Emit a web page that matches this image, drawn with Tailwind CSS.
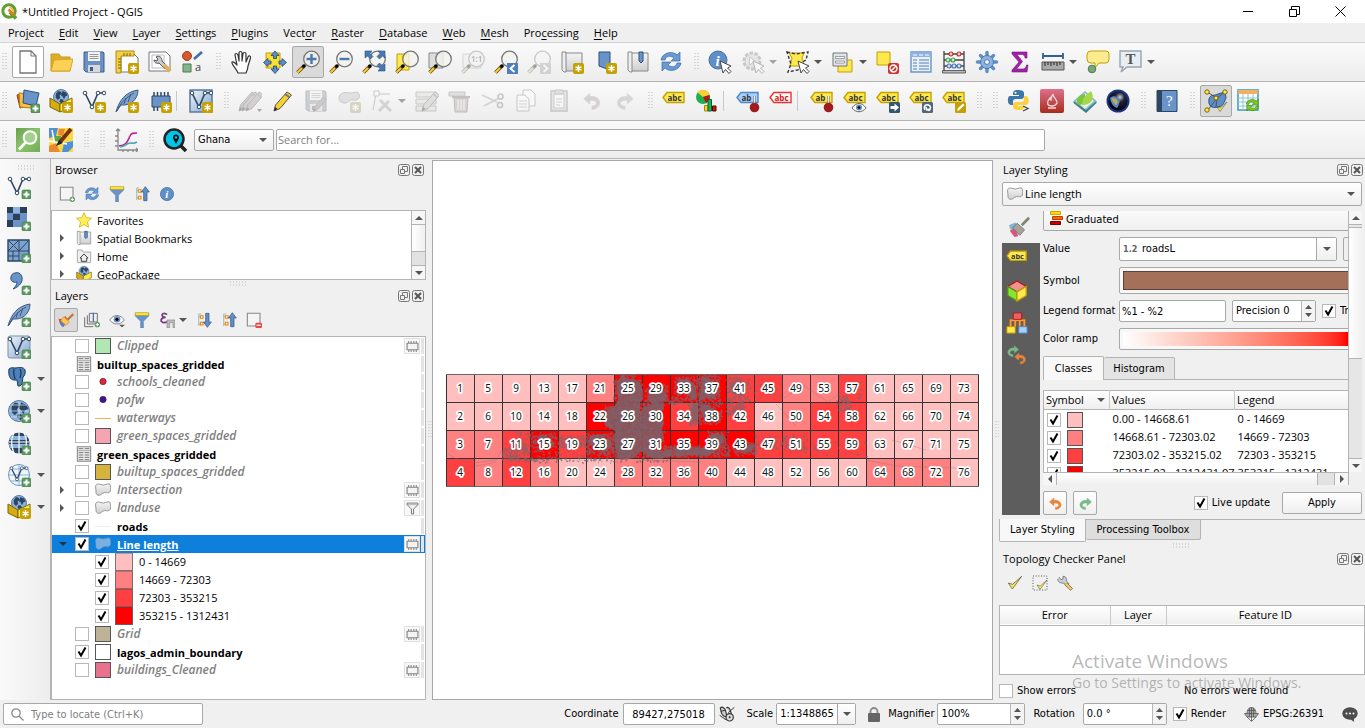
<!DOCTYPE html>
<html lang="en">
<head>
<meta charset="utf-8">
<title>*Untitled Project - QGIS</title>
<script src="https://cdn.jsdelivr.net/npm/@tailwindcss/browser@4"></script>
</head>
<body class="h-screen flex flex-col overflow-hidden bg-[#f0f0f0] text-black text-[11px] leading-4 font-['Open_Sans','Noto_Sans',sans-serif]">

<svg width="0" height="0" class="absolute" aria-hidden="true">
  <defs>
    <linearGradient id="gBlue" x1="0" y1="0" x2="1" y2="1"><stop offset="0" stop-color="#f2f6fa"/><stop offset="1" stop-color="#7fa3cf"/></linearGradient>
    <linearGradient id="gRed" x1="0" y1="0" x2="0" y2="1"><stop offset="0" stop-color="#e0708c"/><stop offset="1" stop-color="#a82c1c"/></linearGradient>
    <linearGradient id="gGreen" x1="0" y1="0" x2="1" y2="1"><stop offset="0" stop-color="#6aa04c"/><stop offset=".5" stop-color="#8cc46c"/><stop offset="1" stop-color="#74ac56"/></linearGradient>
    <radialGradient id="gGlobe" cx=".6" cy=".3" r=".7"><stop offset="0" stop-color="#c8d4e4"/><stop offset=".35" stop-color="#223"/><stop offset="1" stop-color="#000010"/></radialGradient>
    <linearGradient id="gGrey" x1="0" y1="0" x2="0" y2="1"><stop offset="0" stop-color="#f4f4f4"/><stop offset="1" stop-color="#cfcfcf"/></linearGradient>
  </defs>
</svg>

<header class="h-[23px] shrink-0 flex items-center pr-0.5 bg-white">
  <svg class="ml-px" width="17" height="17" viewBox="0 0 17 17"><circle cx="8" cy="8" r="6.2" fill="none" stroke="#5f9e2f" stroke-width="3"/><path d="M9 9l6 6.500" stroke="#5f9e2f" stroke-width="3.500"/><path d="M7.500 6.500L13 12" stroke="#ee7913" stroke-width="2.500"/><path d="M8.500 4.500a4 4 0 0 1 3.500 4" fill="none" stroke="#f3b02c" stroke-width="1.500"/></svg>
  <h1 class="ml-1 flex-1">*Untitled Project - QGIS</h1>
  <button class="w-[46px] h-full grid place-items-center" aria-label="Minimize"><svg width="11" height="11"><path d="M0 5.500h10" stroke="#000"/></svg></button>
  <button class="w-[46px] h-full grid place-items-center" aria-label="Restore"><svg width="11" height="11" fill="none" stroke="#000"><path d="M.5 3.500h7v7h-7zM2.500 3.500v-3h8v8h-3"/></svg></button>
  <button class="w-[46px] h-full grid place-items-center" aria-label="Close"><svg width="11" height="11"><path d="M.5.5l10 10M10.500.5l-10 10" stroke="#000"/></svg></button>
</header>

<nav id="menu" class="h-5 shrink-0 flex items-center gap-[15px] pl-2 border-b border-[#d2d2d2] bg-[#efefef]" aria-label="Main menu"></nav>

<div id="bar1" class="h-[39px] shrink-0 flex items-center border-b border-[#b4b4b4] bg-linear-to-b from-[#fafafa] to-[#ededed]" role="toolbar" aria-label="Project and navigation"></div>
<div id="bar2" class="h-[39px] shrink-0 flex items-center border-b border-[#b4b4b4] bg-linear-to-b from-[#fafafa] to-[#ededed]" role="toolbar" aria-label="Editing and labels"></div>
<div class="h-[38px] shrink-0 flex items-center border-b border-[#b4b4b4] bg-linear-to-b from-[#fafafa] to-[#ededed]" role="toolbar" aria-label="Search">
  <div id="bar3" class="flex items-center"></div>
  <span class="ml-[3px] w-20 grid items-center">
    <select aria-label="Country" class="col-start-1 row-start-1 h-[22px] w-full appearance-none rounded-xs border border-[#a8a8a8] bg-linear-to-b from-white to-[#efefef] px-[3px] font-['DejaVu_Sans_Condensed','Open_Sans',sans-serif]"><option>Ghana</option></select>
    <svg class="col-start-1 row-start-1 justify-self-end mr-[7px] pointer-events-none" width="8" height="4"><path d="M0 0h8L4 4z" fill="#555"/></svg>
  </span>
  <input type="text" aria-label="Search" placeholder="Search for..." class="ml-0.5 h-[22px] flex-1 mr-80 rounded-xs border border-[#a8a8a8] bg-white px-px placeholder:text-[#808080]">
</div>

<main class="flex-1 min-h-0 flex">
  <aside id="side" class="w-[50px] shrink-0 flex flex-col bg-linear-to-r from-[#fafafa] to-[#ededed]" role="toolbar" aria-label="Data sources">
    <span class="h-3 flex items-center justify-center pt-1 pl-1"><svg width="18" height="5"><path d="M0 1h18M0 4h18" stroke="#bbb" stroke-dasharray="1 2"/></svg></span>
  </aside>

  <div class="w-[376px] shrink-0 flex flex-col border-l border-[#b4b4b4] pt-px">
    <section class="flex flex-col h-[120px]" aria-label="Browser">
      <div class="h-5 flex items-center pl-1 pr-0.5 gap-0.5"><h2 class="flex-1">Browser</h2><span data-dock class="flex gap-0.5"></span></div>
      <div id="browserBar" class="h-[30px] flex items-center pl-[3px] pb-0.5"></div>
      <div class="flex-1 min-h-0 flex border border-[#b4b4b4] bg-white">
        <ul id="browserTree" class="flex-1 overflow-hidden"></ul>
        <div class="w-3.5 flex flex-col border-l border-[#b4b4b4] bg-[#e2e2e2]">
          <button aria-label="Scroll up" class="h-3.5 bg-[#f6f6f6] grid place-items-center border-b border-[#b4b4b4]"><svg width="8" height="4"><path d="M0 4h8L4 0z" fill="#555"/></svg></button>
          <div class="h-[27px] bg-linear-to-r from-white to-[#f0f0f0] border-b border-[#b4b4b4]"></div>
          <button aria-label="Scroll down" class="h-3.5 mt-auto bg-[#f6f6f6] grid place-items-center border-t border-[#b4b4b4]"><svg width="8" height="4"><path d="M0 0h8L4 4z" fill="#555"/></svg></button>
        </div>
      </div>
    </section>
    <div class="h-[6px] grid place-items-center"><svg width="18" height="5"><path d="M0 1h18M0 4h18" stroke="#bbb" stroke-dasharray="1 2"/></svg></div>
    <section class="flex-1 min-h-0 flex flex-col" aria-label="Layers">
      <div class="h-5 flex items-center pl-1 pr-0.5 gap-0.5"><h2 class="flex-1">Layers</h2><span data-dock class="flex gap-0.5"></span></div>
      <div id="layersBar" class="h-[30px] flex items-center pl-[3px] pb-0.5"></div>
      <ul id="layers" class="flex-1 min-h-0 overflow-hidden border border-[#b4b4b4] bg-white"></ul>
    </section>
  </div>

  <div class="w-[6px] shrink-0 grid place-items-center"><svg width="5" height="18"><path d="M2 0v18M5 0v18" stroke="#bbb" stroke-dasharray="1 2"/></svg></div>

  <section class="flex-1 min-w-0 mt-px bg-white border border-[#a8a8a8] flex items-center justify-center" aria-label="Map canvas">
    <svg id="map" width="533" height="113" viewBox="0 0 533 113" class="text-[10px] font-['Noto_Sans','Open_Sans',sans-serif]"></svg>
  </section>

  <div class="w-[6px] shrink-0 grid place-items-center"><svg width="5" height="18"><path d="M2 0v18M5 0v18" stroke="#bbb" stroke-dasharray="1 2"/></svg></div>

  <div class="w-[366px] shrink-0 flex flex-col pt-px font-['DejaVu_Sans_Condensed','Open_Sans',sans-serif]">
    <section class="shrink-0 flex flex-col" aria-label="Layer Styling">
      <div class="h-[22px] flex items-center pl-1 pr-0.5 pb-0.5"><h2 class="flex-1 font-['Open_Sans','Noto_Sans',sans-serif]">Layer Styling</h2><span data-dock class="flex gap-0.5"></span></div>
      <span class="ml-[3px] mr-[3px] grid items-center">
        <select aria-label="Layer" class="col-start-1 row-start-1 h-6 w-full appearance-none rounded-xs border border-[#a8a8a8] bg-linear-to-b from-white to-[#efefef] pl-[22px] font-['Open_Sans','Noto_Sans',sans-serif]"><option>Line length</option></select>
        <span data-icon="poly" data-size="16" class="col-start-1 row-start-1 ml-[5px] pointer-events-none"></span>
        <svg class="col-start-1 row-start-1 justify-self-end mr-[7px] pointer-events-none" width="8" height="4"><path d="M0 0h8L4 4z" fill="#555"/></svg>
      </span>
      <div class="mt-[5px] ml-[3px] flex h-[304px]">
        <div id="styleTabs" class="w-[38px] flex flex-col bg-[#5d5d5d]"></div>
        <div class="ml-[3px] flex-1 min-w-0 flex flex-col">
          <div class="flex h-[261px]">
            <div class="flex-1 min-w-0 overflow-hidden">
              <div class="w-[400px] flex flex-col">
                <span class="grid items-center">
                  <select aria-label="Renderer" class="col-start-1 row-start-1 h-5 w-full appearance-none rounded-b-xs border border-t-0 border-[#a8a8a8] bg-linear-to-b from-[#fafafa] to-[#efefef] pl-[22px] pb-0.5"><option>Graduated</option></select>
                  <svg class="col-start-1 row-start-1 ml-[7px] pointer-events-none self-start" width="13" height="16"><path d="M.5.5h10v3h-10z" fill="#fd0" stroke="#d8a000"/><path d="M2.500 5.500h10v3h-10z" fill="#f60" stroke="#b84000"/><path d="M.5 10.500h10v3h-10z" fill="#c00" stroke="#700"/></svg>
                </span>
                <div class="mt-[6px] h-6 flex items-center">
                  <label for="val" class="w-[76px]">Value</label>
                  <span class="w-[218px] h-6 flex items-center rounded-xs border border-[#a8a8a8] bg-white">
                    <b class="pl-[3px] w-[22px] text-[9px] text-[#666]">1.2</b>
                    <input id="val" value="roadsL" class="flex-1 min-w-0 outline-none">
                    <button aria-label="Choose field" class="w-5 h-full border-l border-[#a8a8a8] bg-linear-to-b from-white to-[#efefef] grid place-items-center"><svg width="8" height="4"><path d="M0 0h8L4 4z" fill="#555"/></svg></button>
                  </span>
                  <button aria-label="Expression" class="ml-1.5 w-6 h-6 rounded-xs border border-[#a8a8a8]"></button>
                </div>
                <div class="mt-[6px] h-[27px] flex items-center">
                  <label for="sym" class="w-[76px]">Symbol</label>
                  <button id="sym" aria-label="Change symbol" class="flex-1 h-[27px] rounded-xs border border-[#a8a8a8] bg-[#f8f8f8] p-[3px] flex"><span class="flex-1 h-full border border-[#5c4438] bg-[#a57059]"></span></button>
                </div>
                <div class="mt-[6px] h-[22px] flex items-center">
                  <label for="fmt" class="w-[76px]">Legend format</label>
                  <input id="fmt" value="%1 - %2" class="w-[107px] h-[22px] rounded-xs border border-[#a8a8a8] bg-white px-0.5">
                  <span data-spin="Precision 0" data-label="Precision" class="ml-1.5 w-[84px]"></span>
                  <label class="ml-1.5 flex items-center gap-1"><span data-check="1"></span>Trim</label>
                </div>
                <div class="mt-[6px] h-[22px] flex items-center">
                  <label for="ramp" class="w-[76px]">Color ramp</label>
                  <button id="ramp" aria-label="Color ramp" class="flex-1 h-[22px] rounded-xs border border-[#a8a8a8] bg-[#f8f8f8] p-[3px] flex"><span class="w-[224px] h-full bg-linear-to-r from-white to-[#f00]"></span><span class="flex-1 h-full bg-[#f00]"></span></button>
                </div>
                <div class="mt-[6px] h-6 flex items-end border-b border-[#b4b4b4]" role="tablist">
                  <button role="tab" aria-selected="true" class="w-[61px] h-6 -mb-px rounded-t-xs border border-b-0 border-[#b4b4b4] bg-[#f8f8f8]">Classes</button>
                  <button role="tab" class="w-[71px] h-[22px] rounded-t-xs border border-l-0 border-b-0 border-[#b4b4b4] bg-[#e4e4e4]">Histogram</button>
                </div>
                <table class="mt-2.5 w-full table-fixed border border-[#b4b4b4] bg-white border-collapse font-['Open_Sans','Noto_Sans',sans-serif]">
                  <thead><tr class="h-[19px] text-left bg-linear-to-b from-white to-[#efefef] border-b border-[#b4b4b4]">
                    <th class="w-[66px] font-normal pl-0.5 py-0 border-r border-[#c8c8c8]"><span class="flex items-center justify-between pr-1">Symbol<svg width="8" height="4"><path d="M0 0h8L4 4z" fill="#555"/></svg></span></th>
                    <th class="w-[125px] font-normal pl-0.5 py-0 border-r border-[#c8c8c8]">Values</th><th class="font-normal pl-0.5 py-0">Legend</th></tr></thead>
                  <tbody id="classes"></tbody>
                </table>
              </div>
            </div>
            <div class="w-3.5 mr-[3px] flex flex-col border-l border-[#b4b4b4] bg-[#e6e6e6]">
              <button aria-label="Scroll up" class="h-3.5 bg-[#f6f6f6] grid place-items-center border-b border-[#b4b4b4]"><svg width="8" height="4"><path d="M0 4h8L4 0z" fill="#555"/></svg></button>
              <div class="mt-0.5 h-[132px] bg-linear-to-r from-white to-[#f0f0f0] border-y border-[#b4b4b4]"></div>
              <button aria-label="Scroll down" class="h-3.5 mt-auto bg-[#f6f6f6] grid place-items-center border-t border-[#b4b4b4]"><svg width="8" height="4"><path d="M0 0h8L4 4z" fill="#555"/></svg></button>
            </div>
          </div>
          <div class="h-3.5 mr-4 flex bg-[#e2e2e2] border-t border-r border-[#b4b4b4]">
            <button aria-label="Scroll left" class="w-3.5 bg-[#f6f6f6] grid place-items-center border-r border-[#b4b4b4]"><svg width="4" height="8"><path d="M4 0v8L0 4z" fill="#555"/></svg></button>
            <div class="flex-1 mr-4 bg-linear-to-b from-white to-[#f0f0f0] border-r border-[#b4b4b4]"></div>
            <button aria-label="Scroll right" class="w-3.5 bg-[#f6f6f6] grid place-items-center border-l border-[#b4b4b4]"><svg width="4" height="8"><path d="M0 0v8L4 4z" fill="#555"/></svg></button>
          </div>
          <div class="mt-[6px] pr-[3px] flex items-center">
            <button aria-label="Undo" class="w-6 h-6 rounded-xs border border-[#a8a8a8] bg-linear-to-b from-white to-[#efefef] grid place-items-center"><span data-icon="undoO" data-size="13"></span></button>
            <button aria-label="Redo" class="ml-1.5 w-6 h-6 rounded-xs border border-[#a8a8a8] bg-linear-to-b from-white to-[#efefef] grid place-items-center"><span data-icon="redoG" data-size="13"></span></button>
            <label class="ml-auto flex items-center gap-1"><span data-check="1"></span>Live update</label>
            <button class="ml-3 w-20 h-[22px] rounded-xs border border-[#a8a8a8] bg-linear-to-b from-white to-[#efefef]">Apply</button>
          </div>
        </div>
      </div>
      <div class="mt-1 h-[23px] flex items-start" role="tablist">
        <button role="tab" aria-selected="true" class="w-[87px] h-[23px] rounded-b-xs border border-t-0 border-[#b4b4b4] bg-[#f8f8f8]">Layer Styling</button>
        <button role="tab" class="w-[115px] h-[21px] rounded-b-xs border border-l-0 border-[#b4b4b4] bg-[#dedede]">Processing Toolbox</button>
        <span class="flex-1 border-t border-[#b4b4b4]"></span>
      </div>
    </section>
    <div class="h-[7px] grid place-items-center"><svg width="18" height="5"><path d="M0 1h18M0 4h18" stroke="#bbb" stroke-dasharray="1 2"/></svg></div>
    <section class="relative flex-1 flex flex-col" aria-label="Topology Checker Panel">
      <div class="h-5 flex items-center pl-1 pr-0.5"><h2 class="flex-1 font-['Open_Sans','Noto_Sans',sans-serif]">Topology Checker Panel</h2><span data-dock class="flex gap-0.5"></span></div>
      <div id="topoBar" class="h-7 flex items-center pl-[3px]"></div>
      <div class="mt-2 h-[70px] border border-[#b4b4b4] bg-white">
        <table class="w-full table-fixed border-collapse font-['Open_Sans','Noto_Sans',sans-serif]"><thead><tr class="h-[19px] bg-linear-to-b from-white to-[#efefef] border-b border-[#b4b4b4]"><th class="w-[110px] py-0 font-normal border-r border-[#c8c8c8]">Error</th><th class="w-14 py-0 font-normal border-r border-[#c8c8c8]">Layer</th><th class="py-0 font-normal">Feature ID</th></tr></thead></table>
      </div>
      <div class="mt-2 flex items-center"><label class="w-[185px] flex items-center gap-1"><span data-check="0"></span>Show errors</label><span>No errors were found</span></div>
      <div class="absolute left-[73px] top-[100px] pointer-events-none whitespace-nowrap text-[#707070]/50 font-['Open_Sans','Noto_Sans',sans-serif]">
        <p class="text-[19px] leading-6">Activate Windows</p>
        <p class="text-sm">Go to Settings to activate Windows.</p>
      </div>
    </section>
  </div>
</main>

<footer class="h-7 shrink-0 flex items-center pl-[3px] pr-[7px] font-['DejaVu_Sans_Condensed','Open_Sans',sans-serif]">
  <span class="w-[200px] grid items-center">
    <input type="text" aria-label="Locator" placeholder="Type to locate (Ctrl+K)" class="col-start-1 row-start-1 w-full h-[22px] rounded-xs border border-[#a8a8a8] bg-white pl-[27px] placeholder:text-[#808080]">
    <svg class="col-start-1 row-start-1 ml-2 pointer-events-none" width="13" height="13" fill="none" stroke="#888" stroke-width="1.300"><circle cx="5" cy="5" r="4.200"/><path d="M8 8l4.500 4.500"/></svg>
  </span>
  <label for="coord" class="ml-auto">Coordinate</label>
  <input id="coord" value="89427,275018" class="ml-1 w-[92px] h-[22px] rounded-xs border border-[#a8a8a8] bg-white text-center">
  <button aria-label="Toggle extents" class="w-6 grid place-items-center"><span data-icon="mouse" data-size="16"></span></button>
  <label for="scale" class="ml-2">Scale</label>
  <span class="ml-[3px] w-20 h-[22px] flex rounded-xs border border-[#a8a8a8] bg-white"><input id="scale" value="1:1348865" class="flex-1 min-w-0 pl-[3px] outline-none"><button aria-label="Scales" class="w-[18px] border-l border-[#a8a8a8] bg-linear-to-b from-white to-[#efefef] grid place-items-center"><svg width="8" height="4"><path d="M0 0h8L4 4z" fill="#555"/></svg></button></span>
  <button aria-label="Lock scale" class="ml-3 mr-2"><svg width="12" height="15"><path d="M2.500 7V4.500a3.500 3.500 0 0 1 7 0V7" fill="none" stroke="#888" stroke-width="1.800"/><rect y="6" width="12" height="9" rx="1" fill="#666"/></svg></button>
  <span>Magnifier</span>
  <span data-spin="100%" data-label="Magnifier" class="ml-[3px] w-[88px]"></span>
  <span class="ml-2">Rotation</span>
  <span data-spin="0.0 °" data-label="Rotation" class="ml-2 w-[84px]"></span>
  <label class="ml-1.5 flex items-center gap-1"><span data-check="1"></span>Render</label>
  <button class="ml-[18px] flex items-center gap-1"><svg width="15" height="15" viewBox="0 0 15 15" fill="#aaa" stroke="#555" stroke-width=".8"><path d="M7.500.5C11 .5 12 4 12 6.500h2.500L12 10H3L.5 6.500H3C3 4 4 .5 7.500.5z"/><path d="M3 6.500h9M3.500 3.500h8M5.500 1v9M9.500 1v9M7.500 0v14M3 10l4.500 4.500L12 10" fill="none"/></svg>EPSG:26391</button>
  <button aria-label="Messages" class="ml-[18px]"><svg width="16" height="15"><ellipse cx="8" cy="6.500" rx="7.700" ry="6.200" fill="#4d4d4d"/><path d="M7 11l5 4v-5z" fill="#4d4d4d"/><g fill="#fff"><circle cx="4.500" cy="6.500" r="1"/><circle cx="8" cy="6.500" r="1"/><circle cx="11.500" cy="6.500" r="1"/></g></svg></button>
</footer>

<script>
/* ---- shared icon parts, 24 x 24 ---- */
const star = '<rect x="13" y="13" width="11" height="11" rx="2" fill="#c4a000"/><path d="M18.500 15v7M15.500 16.800l6 3.400M21.500 16.800l-6 3.400" stroke="#fff" stroke-width="1.500"/>';
const plus = '<rect x="15" y="15" width="9" height="9" rx="1.500" fill="#5a9a5f" stroke="#3f7a45" stroke-width=".6"/><path d="M19.500 16.500v6M16.500 19.500h6" stroke="#fff" stroke-width="2"/>';
const handle = '<path d="M8 16L1.500 22.500" stroke="#5a4a10" stroke-width="3.600"/><path d="M6 18L1.500 22.500" stroke="#fcc92f" stroke-width="2.200"/><circle cx="8" cy="16" r="1.800" fill="#000"/>';
const glass = '<circle cx="15.500" cy="9" r="7.800" fill="#f2f2ee" fill-opacity=".8" stroke="#777" stroke-width="1.300"/>' + handle;
const cursor = '<path d="M12 11l3 12 2.500-3.500 3.500 4 2-2-3.500-3.500 3.500-2z" fill="#fff" stroke="#444"/>';
const tag = (f, s, t, w) => `<path d="M1 8.500l4-5h17v10H5z" fill="${f}" stroke="${s}" stroke-width="1.400"/><text x="5.500" y="11.500" font-size="8" font-weight="700" font-family="Open Sans" fill="${w}">${t}</text>`;
const ytag = tag('#fce94f', '#c4a000', 'abc', '#333');
const ball = '<path d="M18.500 7v8" stroke="#888" stroke-width="2.500"/><path d="M18.500 7v8" stroke="#eee"/><circle cx="18.500" cy="18.500" r="4.800" fill="#a01c1c"/>';
const pencil = (f) => `<path d="M3 22l1.500-6L16 3l4.500 3L9 19.500z" fill="${f}" stroke="#555"/><path d="M14 5l4.500 3.300" stroke="#777" stroke-width="2"/><path d="M3 22l1-4 2.500 2z" fill="#222"/>`;
const vee = '<path d="M3 4l7 14 6-14h6" fill="none" stroke="#2c4763" stroke-width="1.600"/><g fill="#fff" stroke="#2c4763"><circle cx="3" cy="4" r="1.800"/><circle cx="10" cy="18" r="1.800"/><circle cx="16" cy="4" r="1.800"/><circle cx="22" cy="4" r="1.800"/></g>';
const feather = '<path d="M1 23C4 12 10 3 23 1c0 9-7 16-17 15z" fill="#7da2cf" stroke="#3c5a80"/><path d="M2 22C6 13 12 8 19 4M9 15l2-6M13 13l3-8" stroke="#3c5a80" fill="none"/>';
const land = 'M-7-4l3-4 4 1 1 3-3 2 1 3-3 3-3-3zM2-8l5 2 2 4-3 1-2 4-2-4-2-1 1-3zM-1 3l3 0 2 3-3 3-3-3z';
const globeAt = (cx, cy, r) => `<circle cx="${cx}" cy="${cy}" r="${r}" fill="#8db2dc" stroke="#5a7ca4"/><path transform="translate(${cx} ${cy}) scale(${r / 10})" d="${land}" fill="#2c4763"/>`;
const box = globeAt(12, 8, 7.5) + '<path d="M1 9l10 6v8L1 18z" fill="#d8ac10" stroke="#7a6400"/><path d="M11 15l12-6v9l-12 5z" fill="#fce94f" stroke="#7a6400"/>';
const page = '<path d="M4 1h11l5 5v17H4z" fill="#fff" stroke="#777" stroke-width="1.300"/><path d="M15 1v5h5" fill="none" stroke="#777"/>';
const scroll = '<path d="M4 3h18v18H4z" fill="url(#gGrey)" stroke="#888"/><path d="M2 2h4v20H4l-2-2z" fill="#eee" stroke="#888"/>';
const chip = '<path d="M4 7h18v11H4z" fill="#6a94c8" stroke="#2c4763"/><path d="M6 3v4M9.500 3v4M13 3v4M16.500 3v4M20 3v4M6 18v4M9.500 18v4" stroke="#2c4763" stroke-width="1.500"/>';
const floppy = '<path d="M2 2h19l1 1v19H4l-2-2z" fill="#6a90c4" stroke="#3b5c8c"/><path d="M6 2h12v9H6z" fill="#f2f2f2"/><path d="M7.500 4.500h9M7.500 6.500h9M7.500 8.500h9" stroke="#999"/><path d="M6 15h12v7H6z" fill="#d8d8d8"/><path d="M8 17h3v4H8z" fill="#3b5c8c"/>';
const arrows2 = (s) => `<path d="M2 10C3 3 13 0 18 5l3-3v9h-9l3-3C11 5 7 6 6 10z" fill="${s}" stroke="#3e6ca8" stroke-width=".7"/><path d="M22 13c-1 7-11 10-16 5l-3 3v-9h9l-3 3c4 3 8 2 9-2z" fill="${s}" stroke="#3e6ca8" stroke-width=".7"/>`;
const info = (x) => `<circle cx="10" cy="10" r="9" fill="#5f8fc8" stroke="#48719f"/><text x="7.500" y="15.500" font-size="15" font-style="italic" font-weight="700" font-family="Liberation Serif" fill="#fff">i</text>${x}`;
const undo = (f) => `<path d="M1 9l8-7v4c9-1 14 4 13 10-1 4-5 7-10 7v-4c4 0 6-2 6-4 0-3-3-4-9-4v5z" fill="${f}" stroke="${f}" stroke-linejoin="round"/>`;
const redo = (f) => `<g transform="translate(24 0) scale(-1 1)">${undo(f)}</g>`;
const mid = (s) => `<g transform="translate(3 3) scale(.75)">${s}</g>`;
const form = '<path d="M1 3h20v5H1zM1 10h20v5H1zM1 17h20v5H1z" fill="#d8dcb8" stroke="#777"/>';
const tree = '<path d="M4 3v18M4 7h4M4 18h4M4 3h4" stroke="#7aa" fill="none"/><path d="M6.500 5.500h4v4h-4zM6.500 15.500h4v4h-4z" fill="#fff" stroke="#f08000" stroke-width="1.600"/>';
const brush = '<path d="M1 12l8-5 7 9-6 6c-5 0-8-5-9-10z" fill="#c8e0a0"/><path d="M1 10l7-3 3 6-6 4z" fill="#80b0e0"/><path d="M2 16l6-3 3 9-4 1z" fill="#e05080"/><path d="M10 8l8 7-5 6-8-8z" fill="#a4a49a" stroke="#777"/><path d="M15 10l8-8" stroke="#84846c" stroke-width="3"/>';
const check = '<path d="M2 12l6 9L22 2 8.500 14z" fill="#fce94f" stroke="#444" stroke-linejoin="round"/>';
const area = 'M1 9c-1-6 3-7 8-5s8-2 13-1c2 3 2 8 1 11-3 4-6 1-9 2-5 1-4 4-9 4-5-1-3-7-4-11z';
const I = {
  new: page,
  open: '<path d="M2 4h8l2 3h9v14H2z" fill="#e0ac28" stroke="#c49a20"/><path d="M5 10l19-1-3 12H2z" fill="#fcd155" stroke="#d4a52a"/>',
  save: floppy,
  layoutNew: '<path d="M6 3h12l5 5v14H6z" fill="#fff" stroke="#777"/><path d="M1 1h18v5H6v17H1z" fill="#f4cf48" stroke="#b08a10"/><path d="M9 3v3M12 3v3M15 3v3M3 9h3M3 12h3M3 15h3M3 18h3" stroke="#7a6400"/>' + star,
  layoutMgr: '<path d="M1 2h17l4 4v15H1z" fill="#fff" stroke="#777"/><path d="M4 5h12v13H4z" fill="none" stroke="#bbc"/><path d="M8 7c3-2 6 0 6 4l5 5-2 3-6-6c-3 1-5-1-5-3l3 1 1-2z" fill="#ccc" stroke="#555"/><path d="M16 15l6 6" stroke="#e0b060" stroke-width="4"/>',
  style: '<circle cx="6" cy="6" r="4.500" fill="#d45a2c" stroke="#a03c18"/><path d="M13 9L21 2" stroke="#3f6ca8" stroke-width="2.600"/><path d="M2 14h8v8H2z" fill="#84b48c" stroke="#4d7a55"/><text x="14" y="21" font-size="11" font-family="Open Sans" fill="#444">a</text>',
  hand: '<path d="M8 23c-2-5-7-9-6-11 2-1 3 1 5 3L5 5c0-2 2-2 3 0l1 6V3c0-2 3-2 3 0v8l1-7c0-2 3-2 3 0v8l2-5c1-2 3-1 2.500 1L18 16c0 3-1 5-2 7z" fill="#fff" stroke="#333" stroke-width="1.200" stroke-linejoin="round"/>',
  pan: '<path d="M3 3h14v15H3z" fill="#fce030" stroke="#c4a000"/><path d="M12 1l4 4.500h-2.500v3h-3v-3H8zM12 23.500l4-4.500h-2.500v-3h-3v3H8zM.5 12.500l4.500-4V11h3v3H5v2.500zM23.500 12.500l-4.500-4V11h-3v3h3v2.500z" fill="#5f8fc8" stroke="#2c5080" stroke-width=".9"/>',
  zin: glass + '<path d="M15.500 4v10M10.500 9h10" stroke="#4a78b0" stroke-width="2.400"/>',
  zout: glass + '<path d="M10.500 9h10" stroke="#4a78b0" stroke-width="2.400"/>',
  zfull: glass + '<path d="M3 1h7L8 3.500l3 3L8.500 9l-3-3L3 8zM23 1h-7l2 2.500-3 3L17.500 9l3-3L23 8zM23 21h-7l2-2.500-3-3 2.500-2.500 3 3L23 14z" fill="#4a78b0" stroke="#2c5080" stroke-width=".6"/>',
  zsel: '<path d="M2 4h12v16H2z" fill="#fce94f" stroke="#c4a000"/>' + glass,
  zlay: '<path d="M1 3h14v15H1z" fill="#ddd" stroke="#888"/>' + glass,
  z11: '<path d="M2 4h18v14H2z" fill="#eee" stroke="#999"/>' + glass + '<text x="10" y="12" font-size="8" font-weight="700" font-family="Open Sans" fill="#555">1:1</text>',
  zlast: glass + '<path d="M13 13h11v11H13z" fill="#4f80ba"/><path d="M20.500 15l-4 3.500 4 3.500" fill="none" stroke="#fff" stroke-width="2"/>',
  znext: glass + '<path d="M13 13h11v11H13z" fill="#999"/><path d="M16.500 15l4 3.500-4 3.500" fill="none" stroke="#fff" stroke-width="2"/>',
  view: scroll + star,
  bmNew: '<path d="M6 2h11v14l-3 3-8-3z" fill="#6a94c8" stroke="#2c5080"/>' + star,
  bm: scroll + '<path d="M13 2h4v9l-2 2-2-2z" fill="#6a94c8" stroke="#2c5080"/>',
  refresh: arrows2('#6a9ad4'),
  ident: info(cursor),
  action: '<circle cx="11" cy="11" r="8" fill="#ccc" stroke="#777" stroke-width="3" stroke-dasharray="3.500 1.500"/><path d="M8.500 7l6 4-6 4z" fill="#fff" stroke="#777"/>' + cursor,
  select: '<path d="M3 3h15l-2 5 2 8H4l2-8z" fill="#fce94f" stroke="#c4a000"/><path d="M1 2l9 2 12-2-2 8-5 3 1 6-14 3 3-8z" fill="none" stroke="#333" stroke-width="1.400" stroke-dasharray="3 2"/>' + cursor,
  selForm: '<path d="M7 10h14v12H7z" fill="#fce94f" stroke="#c4a000"/><path d="M2 3h14v13H2z" fill="#dfe4ea" stroke="#777"/><path d="M4.500 6.500h9v2h-9zM4.500 11h9v2h-9z" fill="#fff" stroke="#888" stroke-width=".8"/>',
  desel: '<path d="M1 2h13v13H1z" fill="#fce94f" stroke="#c4a000"/><rect x="12" y="13" width="11" height="11" rx="2" fill="#d83030"/><circle cx="17.500" cy="18.500" r="3.500" fill="none" stroke="#fff" stroke-width="1.400"/><path d="M15 21l5-5" stroke="#fff" stroke-width="1.400"/>',
  table: '<path d="M2 2h20v20H2z" fill="#e8f0f8" stroke="#6a94c8" stroke-width="1.400"/><path d="M2 2h20v5H2z" fill="#8db2dc"/><path d="M4 5h4M10 5h4M16 5h4" stroke="#fff"/><path d="M4 10h4M4 13h4M4 16h4M4 19h4M10 10h10M10 13h10M10 16h10M10 19h10" stroke="#5580b4"/>',
  abacus: '<path d="M2 1v21M22 1v21M2 4h20M2 10h20M2 16h20" stroke="#444" stroke-width="1.300"/><path d="M.5 20.500h23v2.500H.5z" fill="#bbb" stroke="#444" stroke-width=".8"/><g stroke-width="1.200"><g fill="#f8c8c8" stroke="#c03030"><circle cx="9" cy="4" r="2"/><circle cx="17" cy="4" r="2"/></g><g fill="#d0ecd0" stroke="#4a9a50"><circle cx="6" cy="10" r="2"/><circle cx="11" cy="10" r="2"/></g><g fill="#d0e0f4" stroke="#4a78b0"><circle cx="7" cy="16" r="2"/><circle cx="12" cy="16" r="2"/><circle cx="17" cy="16" r="2"/></g></g>',
  gear: '<g stroke="#5f8fc8" stroke-width="3.500" stroke-linecap="round"><path d="M12 2.500v19M2.500 12h19M5.500 5.500l13 13M18.500 5.500l-13 13"/></g><circle cx="12" cy="12" r="6.500" fill="#8db2dc" stroke="#4a78b0"/><circle cx="12" cy="12" r="2.400" fill="#fff" stroke="#4a78b0"/>',
  sigma: '<path d="M4 2h15v6h-2c0-3-2-3.500-4-3.500H9l5.500 7L8.500 19H14c3 0 4-1 4.500-4H20l-1 7H4v-2l7-8L4 4z" fill="#a020a8" stroke="#7a1080" stroke-width=".6"/>',
  measure: '<path d="M2 3v6M22 3v6M2 6h20" stroke="#2f5f94" stroke-width="1.800"/><path d="M1 12h22v8H1z" fill="#aaa" stroke="#555"/><path d="M4 12v4M7 12v3M10 12v4M13 12v3M16 12v4M19 12v3" stroke="#222"/>',
  tip: '<path d="M5 1h15q3 0 3 3v5q0 4-3 4h-7l-4 5v-5H5q-4 0-4-4V5q0-4 4-4z" fill="#fcec90" stroke="#c4a000"/><circle cx="6" cy="19" r="3.800" fill="#78a878" stroke="#4d7a55"/>',
  note: '<path d="M1 1h21v16H8l-6 5 2-5H1z" fill="#e8eef4" stroke="#9aa4ae" stroke-width="1.400"/><text x="6.500" y="14" font-size="15" font-family="Liberation Serif" font-weight="700" fill="#555">T</text>',
  layers: '<path d="M1 6l12-3 3 12-12 4z" fill="#d45a2c" stroke="#a03c18"/><path d="M3 4l13 1-1 14-11-1z" fill="#fcc040" stroke="#b08010"/><path d="M8 1l15 3-3 13L7 14z" fill="#6a94c8" stroke="#2c5080"/>' + plus,
  gpkg: box + star, vNew: vee + star, feaNew: feather + star, chipNew: chip + star,
  vBox: '<path d="M1 1h22v22H1z" fill="url(#gBlue)" stroke="#5a7a9c" stroke-width="1.500"/>' + vee + star,
  pencils: '<g transform="translate(-2 0)">' + pencil('#888') + '</g><g transform="translate(1 0)">' + pencil('#999') + '</g><g transform="translate(5 0)">' + pencil('#b88888') + '</g><path d="M19 20h5l-2.500 3z" fill="#222"/>',
  edit: pencil('#f4d030'),
  saveEd: floppy + '<g transform="translate(7 6) scale(.75)">' + pencil('#c66') + '</g>',
  blob: '<path d="M2 9c0-6 8-6 10-5s8-3 10 1-2 7-6 6-4 3-8 3-6-2-6-5z" fill="#bbb" stroke="#777"/>' + star,
  vertex: '<path d="M3 21L6 5h14" fill="none" stroke="#777"/><path d="M4 2h5v5H4z" fill="#fff" stroke="#777"/><path d="M9 22l10-10M10 11l11 11" stroke="#999" stroke-width="3"/>',
  formEd: form + '<g transform="translate(4 0)">' + pencil('#bbb') + '</g>',
  trash: '<path d="M1 3h16v4H1z" fill="#bbb" stroke="#777"/><path d="M6 9h14l-1 14H7z" fill="#c89090" stroke="#a05050"/><path d="M4 7h18v2H4z" fill="#a05050"/><path d="M10 11v10M13 11v10M16 11v10" stroke="#fff"/>',
  cut: '<path d="M1 6l15 7M3 17L18 9" stroke="#999" stroke-width="1.800"/><g fill="none" stroke="#777" stroke-width="1.700"><circle cx="19.500" cy="7.500" r="2.500"/><circle cx="19" cy="16" r="2.500"/></g>',
  copy: '<path d="M9 1h8l4 4v12H9z" fill="#fff" stroke="#777"/><path d="M3 6h8l4 4v12H3z" fill="#fff" stroke="#777"/><path d="M5 12h8M5 15h8M5 18h8" stroke="#999"/>',
  paste: '<path d="M4 2h16v20H4z" fill="#ccc" stroke="#777" stroke-width="1.400"/><path d="M7 5h10v14H7z" fill="#fff" stroke="#888"/><path d="M8 1h8v4H8z" fill="#bbb" stroke="#777"/><path d="M9 10h6M9 13h6M9 16h4" stroke="#888"/>',
  undo: mid(undo('#b09080')), redo: mid(redo('#90a890')), undoO: undo('#e8833a'), redoG: redo('#7ab888'),
  undoRedo: '<g transform="translate(1 1) scale(.55)">' + redo('#7ab888') + '</g><g transform="translate(9 9) scale(.55)">' + undo('#e8833a') + '</g>',
  abc: ytag,
  diag: '<circle cx="8" cy="8" r="7" fill="#1eb050"/><path d="M8 8V1a7 7 0 0 1 6.500 5z" fill="#fcd030"/><path d="M8 8L2.500 3.500A7 7 0 0 1 10 1.200z" fill="#fcd030"/><path d="M8 8l6.500-2A7 7 0 0 1 11 14z" fill="#b01818"/><path d="M9.500 16.500h3.500V22H9.500z" fill="#fcd030" stroke="#a80"/><path d="M13 10.500h3.500V22H13z" fill="#1eb050" stroke="#063"/><path d="M17.500 17h3.500v5h-3.500z" fill="#c01818" stroke="#600"/>',
  abcB: tag('#a8d0f8', '#4a88d0', 'ab', '#333') + ball, abcR: tag('#fff', '#f03030', 'abc', '#e01010'),
  abcP: tag('#fce94f', '#c4a000', 'ab', '#333') + ball,
  abcE: ytag + '<path d="M9 19c4-6 10-6 14 0-4 5-10 5-14 0z" fill="#fff" stroke="#666"/><circle cx="16" cy="18.500" r="3" fill="#5f8fc8"/><circle cx="16" cy="18.500" r="1.300" fill="#000"/>',
  abcM: ytag + '<rect x="13" y="13" width="11" height="11" rx="1.500" fill="#34566e"/><path d="M14.500 17h4v-2.500l4.500 4-4.500 4V20h-4z" fill="#fff"/>',
  abcT: ytag + '<rect x="13" y="13" width="11" height="11" rx="1.500" fill="#50687c"/><path d="M16 21c-2-4 1-6 3.500-5s3 4 0 6M17 18l1 3 3-1" fill="none" stroke="#fff" stroke-width="1.500"/>',
  abcC: ytag + '<rect x="13" y="13" width="11" height="11" rx="1.500" fill="#c4a000"/><path d="M15 22l1-3 5-4.500 1.500 1.500-5 5z" fill="#fff"/>',
  py: '<path d="M11 1c-5 0-5 2-5 5h6v1H3c-3 0-3 9 1 9h2v-3c0-3 2-3 3-3h5c2 0 3-1 3-3V4c0-2-2-3-6-3z" fill="#3d77a8"/><path d="M12 21c5 0 5-2 5-4h-6v-1h8c4 0 3-9 0-9h-2v3c0 2-1 3-3 3H9c-2 0-3 1-3 3v2c0 2 2 3 6 3z" fill="#fcd040"/><circle cx="8.500" cy="3.800" r="1" fill="#fff"/><path d="M16 17l5 2.500-5 2.500" fill="none" stroke="#444" stroke-width="1.300"/>',
  fire: '<rect width="24" height="24" rx="2" fill="url(#gRed)"/><path d="M12 17c-6 0-5-5-2-8-0 2 1 2 1 2 0-3 1-4 2-6 0 4 5 6 4 9-1 2-2 3-5 3zM8 19h8" fill="none" stroke="#f4d8d8" stroke-width="1.400"/>',
  leaf: '<path d="M12 2l11.500 10L13 22 .5 12z" fill="#8ab8c0"/><path d="M.5 12v2L13 24l10.500-10v-2L13 21z" fill="#3c8088"/><path d="M3 12l9-8 9 8-9 8z" fill="#e4f0f0"/><path d="M5 16C2 10 6 6 12 5c1 6 0 11-7 11z" fill="#7cc43c"/><path d="M9 16c0-7 4-10 9-14 4 7 1 14-9 14z" fill="#a4d848"/>',
  globe: '<circle cx="12" cy="12" r="11.500" fill="#1c3480"/><circle cx="12" cy="12" r="9.500" fill="url(#gGlobe)"/><path d="M4 9c3-3 7-2 8 1l2 2c-1 2-1 4-3 7-3-1-6-4-7-10z" fill="#5a8cc0"/><path d="M6 9l4 1 2 3-2 3c-2-2-4-4-4-7z" fill="#c8a858"/>',
  help: '<path d="M2 1.500h20v21H2z" fill="#6a94c8" stroke="#2c4763"/><path d="M2 1.500h5v21H2z" fill="#2c4763"/><text x="11" y="17" font-size="15" font-family="Liberation Serif" fill="#fff">?</text>',
  topo: '<path d="M5 10c1-5 6-3 9-5l7-2 1 6c-2 4-2 8-8 9-7 2-10-2-9-8z" fill="#5f8fc8" stroke="#2c5080"/><path d="M4 21L13 9l8-6M3 3l10 6-1 9" fill="none" stroke="#555"/><g fill="#fce94f" stroke="#7a6400"><circle cx="3" cy="3" r="2.200"/><circle cx="21" cy="3" r="2.200"/><circle cx="3" cy="21" r="2.200"/><circle cx="12" cy="9" r="2"/></g><g transform="translate(12 12) scale(.5)">' + check + '</g>',
  tblRef: '<path d="M1 1h20v20H1z" fill="#fff" stroke="#3a98b8" stroke-width="1.500"/><path d="M1 1h20v4H1z" fill="#f4b060"/><path d="M1 9h20M1 13h20M1 17h20M6 5v16M11 5v16M16 5v16" stroke="#88c4d8"/><g transform="translate(8 9) scale(.62)"><path d="M2 10C3 3 13 0 18 5l3-3v9h-9l3-3C11 5 7 6 6 10z" fill="#78d020" stroke="#3c8008"/><path d="M22 13c-1 7-11 10-16 5l-3 3v-9h9l-3 3c4 3 8 2 9-2z" fill="#78d020" stroke="#3c8008"/></g>',
  osm: '<rect width="24" height="24" fill="url(#gGreen)"/><circle cx="14" cy="9.500" r="6.300" fill="#a4d090" stroke="#fff" stroke-width="2"/><path d="M10 14l-7 7.500" stroke="#fff" stroke-width="2.600"/>',
  map: '<rect width="24" height="24" fill="#f8d848"/><path d="M0 0h9l-2 8-7 2zM13 24l2-9 9-2v6l-5 5z" fill="#5090d8"/><path d="M5 8h7v7H5z" fill="#58a848"/><path d="M3 2l4 20M0 13l18 3" stroke="#fff" stroke-width="1.500"/><path d="M0 18l7-3 4 9H0zM10 1l6 0-2 7-5-1z" fill="#e88830"/><path d="M11 14L22 1" stroke="#7c3008" stroke-width="4"/><path d="M7 18l3-6 4 3z" fill="#222"/>',
  chart: '<path d="M4 1v21h20M2 3l2-2 2 2M22 20l2 2-2 2M1 8h3M1 13h3M1 18h3M9 22v2M14 22v2M19 22v2" stroke="#888" fill="none" stroke-width="1.300"/><path d="M5 18c8-1 8-4 11-10 1-3 3-3 7-3" fill="none" stroke="#c02090" stroke-width="1.600"/><path d="M6 19c6 0 6-4 10-4 3 0 4 1 7-1" fill="none" stroke="#48a8b8" stroke-width="1.600"/>',
  cyan: '<circle cx="11" cy="11" r="9.500" fill="#00c4e8" stroke="#222" stroke-width="2.500"/><path d="M18 18l5 5" stroke="#222" stroke-width="3.500"/><path d="M13 16c-2-4-3-5-3-6.500a3 3 0 0 1 6 0c0 1.500-1 2.500-3 6.500z" fill="#111"/><circle cx="13" cy="9.500" r="1.200" fill="#00c4e8"/>',
  sV: vee + plus, sFea: feather + plus,
  sRas: '<path d="M0 0h20v20H0z" fill="#6a94c8"/><path d="M0 0h6v6H0zM13 0h7v6h-7zM6 7h7v6H6zM0 13h6v7H0z" fill="#2c3e58"/><path d="M6 0h7v6H6z" fill="#8db2dc"/>' + plus,
  sMesh: '<path d="M1 1h21v21H1z" fill="#7da2cf" stroke="#2c4763" stroke-width="1.400"/><path d="M1 12h21M12 1v21M1 1l11 11M1 12L12 1M12 12L22 1M1 17h11M6 12v10" stroke="#2c4763" fill="none"/>' + plus,
  sComma: '<path d="M8 2c6-2 9 5 6 10-2 3-5 5-8 6 3-3 4-5 4-7-4 1-7-1-6-5 0-2 2-4 4-4z" fill="#6a94c8" stroke="#2c5080"/>' + plus,
  sVB: '<rect x="1" y="1" width="22" height="22" rx="2" fill="url(#gBlue)" stroke="#7a90a8"/>' + vee + plus,
  sPg: '<path d="M2 2c2-2 5-1 7-1 3-1 8-1 9 2 1 4-1 6-2 7l-1 7-2 2h-2l-1-6H7C3 13 1 8 2 2z" fill="#4f80b8" stroke="#1c3a5c"/><path d="M7 2c-1 4 0 6 1 10M13 2c2 3 1 5 0 9" stroke="#1c3a5c" fill="none" stroke-width="1.300"/>' + plus,
  sWms: globeAt(12, 12, 10.5) + '<path d="M2 12h20M12 2v20M4 6h16M4 18h16" stroke="#dce8f4" stroke-width=".7"/>' + plus,
  sWcs: '<circle cx="12" cy="12" r="10.500" fill="#2c4763"/><path d="M4 5h16v4H2zM1.500 13h20v4H3z" fill="#8db2dc"/><path d="M2 11h20M12 1v22M7 2c-4 7-3 13 0 20M17 2c4 7 3 13 0 20" stroke="#fff" fill="none" stroke-width="1.200"/>' + plus,
  sWfs: '<circle cx="12" cy="12" r="10.500" fill="#f0f5fa" stroke="#6a94c8"/><path d="M2 12h20M12 2v20M4 6h16M4 18h16" stroke="#8db2dc"/><g transform="translate(2 2) scale(.8)">' + vee + '</g>' + plus,
  sGp: box + star,
  bAdd: '<path d="M2 2h19v19H2z" fill="#f4f4f4" stroke="#888" stroke-width="1.600"/><circle cx="20" cy="20" r="4" fill="#5a9a5f"/><path d="M20 17.500v5M17.500 20h5" stroke="#fff" stroke-width="1.500"/>',
  filter: '<path d="M2 2h20v4l-8 8v10h-4V14L2 6z" fill="#6a94c8" stroke="#5580b4"/><path d="M2 1h20v4H2z" fill="#fce94f" stroke="#c4a000"/>',
  collapse: tree + '<path d="M17 1l6 8h-3.500v13h-5V9H11z" fill="#5f8fc8" stroke="#2c5080"/>',
  expand: tree + '<path d="M17 23l6-8h-3.500V2h-5v13H11z" fill="#5f8fc8" stroke="#2c5080"/>',
  infoS: '<g transform="translate(1 1) scale(1.100)">' + info('') + '</g>',
  fav: '<path d="M12 1l3.200 7.500 8 .8-6 5.500 1.800 8.200-7-4.400L5 23l1.800-8.200-6-5.500 8-.8z" fill="#fcf060" stroke="#e0b820" stroke-width="1.400"/>',
  home: '<path d="M2 3h7l2 3h11v16H2z" fill="#eee" stroke="#888"/><path d="M6 15l6-6 6 6h-2v5H8v-5z" fill="none" stroke="#444" stroke-width="1.500"/>',
  lStyle: '<path d="M1 10l6 1 4-5 3 4-7 12C4 21 2 16 1 10z" fill="#e84040"/><path d="M2 15l5-2 5 4-4 6z" fill="#4a88d8"/><path d="M9 7l8 8-5 5-8-7z" fill="#fcc850" stroke="#c08820"/><path d="M14 12l9-9" stroke="#c07840" stroke-width="3.500"/>',
  group: '<path d="M1 8v14h13M5 5v13h13" fill="none" stroke="#666" stroke-width="1.400"/><path d="M8 2h12v13H8z" fill="#eee" stroke="#666" stroke-width="1.400"/><path d="M14 1v14" stroke="#4a78b0" stroke-width="2"/><circle cx="20" cy="19" r="4" fill="#5a9a5f"/><path d="M20 16.500v5M17.500 19h5" stroke="#fff" stroke-width="1.500"/>',
  eye: '<path d="M1 12c6-9 16-9 22 0-6 8-16 8-22 0z" fill="#fff" stroke="#777" stroke-width="1.300"/><circle cx="12" cy="11" r="5" fill="#6a94c8"/><circle cx="12" cy="11" r="2.400" fill="#000"/><path d="M15 19h9l-4.500 4z" fill="#555"/>',
  eps: '<path d="M12 4C8 0 2 3 6 7c1 1 3 1 4 1-8 0-9 7-3 8 3 0 5-1 6-2" fill="none" stroke="#7a3a80" stroke-width="2.600"/><path d="M12 12h12v12h-3v-8h-5v8h-4z" fill="#bbb" stroke="#888"/>',
  remove: '<path d="M2 2h19v19H2z" fill="#f4f4f4" stroke="#888" stroke-width="1.600"/><rect x="14" y="16" width="10" height="8" rx="2" fill="#e84848"/><path d="M16 20h6" stroke="#fff" stroke-width="2"/>',
  poly: `<path d="${area}" fill="url(#gGrey)" stroke="#888" stroke-width="1.300"/>`,
  polyB: `<path d="${area}" fill="#7ab0e0" stroke="#5f93c4"/>`,
  tbl: '<path d="M2 1h20v22H2z" fill="#eee" stroke="#888" stroke-width="1.600"/><path d="M2 7h20" stroke="#888"/><path d="M4 4h7M13 4h7M4 10h7M13 10h7M4 13.500h7M13 13.500h7M4 17h7M13 17h7M4 20.500h7M13 20.500h7" stroke="#777" stroke-width="1.500"/>',
  mem: '<path d="M2 6h20v12H2z" fill="#f4f4f4" stroke="#888" stroke-width="2.200"/><path d="M5 2v4M9.500 2v4M14.500 2v4M19 2v4M5 18v4M9.500 18v4M14.500 18v4M19 18v4" stroke="#888" stroke-width="2"/>',
  filt: '<path d="M2 2h20v3l-8 8v9h-4v-9L2 5z" fill="#f4f4f4" stroke="#777" stroke-width="1.800"/><path d="M2 5h20" stroke="#777"/>',
  brush, check,
  cube: '<path d="M12 1l10 6-10 6L2 7z" fill="#f49090" stroke="#b01818" stroke-width="1.300"/><path d="M2 7l10 6v10L2 17z" fill="#8ae234" stroke="#4a9a10" stroke-width="1.300"/><path d="M22 7l-10 6v10l10-6z" fill="#fce94f" stroke="#c4a000" stroke-width="1.300"/>',
  nodes: '<path d="M5 17V9h15v8M10 7v9M15 7v9" fill="none" stroke="#a86018" stroke-width="3.400"/><path d="M5 17V9h15v8M10 7v9M15 7v9" fill="none" stroke="#e8a050" stroke-width="1.800"/><path d="M8 1h9v7H8z" fill="#f06060" stroke="#b01818"/><path d="M1 16h9v7H1z" fill="#fce94f" stroke="#c4a000"/><path d="M14 16h9v7h-9z" fill="#a8d0f8" stroke="#4a88d0"/>',
  checkBox: '<path d="M1.500 1.500h21v21h-21z" fill="none" stroke="#555" stroke-width="1.500" stroke-dasharray="1.500 2.500"/><g transform="translate(6 6) scale(.75)">' + check + '</g>',
  wrench: '<path d="M3 3l3 4 3-1V2c5 0 6 4 5 7l4 4-4 4-4-5C5 13 1 10 1 6" fill="#ccc" stroke="#555"/><path d="M13 13l9 9" stroke="#6b4d20" stroke-width="5"/><path d="M13 13l8.500 8.500" stroke="#f0c878" stroke-width="3.500"/>',
  mouse: '<path d="M2 3c3-3 7 0 8 5l2 7c-4 3-8-2-9-7zM11 3c2-2 5 0 6 4l2 6" fill="#ccc" stroke="#333" stroke-width="1.700"/><path d="M3 8l7-2M14 10l9-8M1 14l10 7" stroke="#333" stroke-width="1.500"/><circle cx="16" cy="17" r="5.500" fill="#ddd" stroke="#333" stroke-width="1.700"/><circle cx="16" cy="17" r="1.500" fill="#333"/>'
};
const svg = (n, s) => `<svg class="block" width="${s}" height="${s}" viewBox="0 0 24 24" aria-hidden="true">${I[n]}</svg>`;
const caret = '<svg width="8" height="4"><path d="M0 0h8L4 4z" fill="#555"/></svg>';
const put = (id, html) => document.getElementById(id).insertAdjacentHTML('beforeend', html);

put('menu', 'Pro_ject _Edit _View _Layer _Settings _Plugins Vect_or _Raster _Database _Web _Mesh Pro_cessing _Help'.split(' ')
  .map(t => `<button>${t.replace(/_(.)/, '<span class="underline underline-offset-2">$1</span>')}</button>`).join(''));

/* toolbar items: | grip, . separator, v drop-down arrow, * checked, - disabled */
function bar(spec) {
  return spec.trim().split(/\s+/).map(t => {
    if (t === '|0') return '<span class="w-[11px] shrink-0 flex justify-end pr-1"><svg width="5" height="18"><path d="M1 0v18M4 0v18" stroke="#b4b4b4" stroke-dasharray="1 2"/></svg></span>';
    if (t === '|') return '<span class="w-4 shrink-0 flex justify-end pr-1"><svg width="5" height="18"><path d="M1 0v18M4 0v18" stroke="#b4b4b4" stroke-dasharray="1 2"/></svg></span>';
    if (t === '.') return '<span class="w-2 shrink-0 flex justify-start"><span class="w-px h-5 bg-[#c8c8c8]"></span></span>';
    if (t === 'v') return `<button aria-label="More" class="w-3 shrink-0">${caret}</button>`;
    if (t === '-v') return `<button aria-label="More" class="w-3 shrink-0 opacity-50">${caret}</button>`;
    if (t[0] === '*') return `<button aria-label="${t.slice(1)}" aria-pressed="true" class="w-8 h-8 ml-px shrink-0 grid place-items-center rounded-xs border border-[#a8a8a8] bg-[#dadada]">${svg(t.slice(1), 24)}</button>`;
    if (t[0] === '+') return `<button aria-label="${t.slice(1)}" class="w-8 h-8 ml-px shrink-0 grid place-items-center rounded-xs border border-[#a8a8a8] bg-white">${svg(t.slice(1), 24)}</button>`;
    if (t[0] === '-') return `<button aria-label="${t.slice(1)}" disabled class="w-[33px] h-8 shrink-0 grid place-items-center opacity-35 grayscale-75">${svg(t.slice(1), 24)}</button>`;
    return `<button aria-label="${t}" class="w-[33px] h-8 shrink-0 grid place-items-center">${svg(t, 24)}</button>`;
  }).join('');
}
put('bar1', bar('|0 +new open save layoutNew layoutMgr style | hand pan *zin zout zfull zsel zlay -z11 zlast -znext view bmNew bm refresh | ident -action -v select v selForm v desel table abacus gear sigma measure v tip note v'));
put('bar2', bar('|0 layers gpkg vNew feaNew chipNew . vBox | -pencils edit -saveEd -blob -vertex -v -formEd -trash -cut -copy -paste -undo -redo | abc diag . abcB abcR . abcP abcE abcM abcT abcC | | py fire leaf globe | help | *topo tblRef'));
put('bar3', bar('|0 osm map | | chart | cyan'));

put('side', [['sV'], ['sRas'], ['sMesh'], ['sComma'], ['sFea'], ['sVB'], ['sPg', 1], ['sWms', 1], ['sWcs'], ['sWfs', 1], ['sGp', 1]]
  .map(([n, a]) => `<div class="h-8 flex items-center"><button aria-label="${n}" class="ml-[7px]">${svg(n, 24)}</button>${a ? `<button aria-label="More" class="ml-1.5">${caret}</button>` : ''}</div>`).join(''));

const small = (names) => names.map(n =>
  n === 'v' ? `<button aria-label="More" class="w-2 mr-1">${caret}</button>`
  : n[0] === '*' ? `<button aria-label="${n.slice(1)}" aria-pressed="true" class="w-6 h-6 mr-px grid place-items-center rounded-xs border border-[#a8a8a8] bg-[#dadada]">${svg(n.slice(1), 16)}</button>`
  : `<button aria-label="${n}" class="w-[25px] h-6 grid place-items-center">${svg(n, 16)}</button>`).join('');
put('browserBar', small(['bAdd', 'refresh', 'filter', 'collapse', 'infoS']));
put('layersBar', small(['*lStyle', 'group', 'eye', 'filter', 'eps', 'v', 'expand', 'collapse', 'remove']));
put('topoBar', small(['check', 'checkBox', 'wrench']));

put('styleTabs', ['brush', 'abc', 'cube', 'nodes', 'undoRedo'].map((n, i) => i
  ? `<button aria-label="${n}" class="h-8 pr-2 grid place-items-center">${svg(n, 22)}</button>`
  : `<button aria-label="${n}" class="h-8 pr-1 grid place-items-center bg-[#f0f0f0]">${svg(n, 22)}</button>`).join(''));

const cbox = (on, label) => `<span class="grid w-3.5 h-3.5 shrink-0"><input type="checkbox" ${label ? `aria-label="${label}"` : ''} ${on ? 'checked' : ''} class="peer col-start-1 row-start-1 w-3.5 h-3.5 appearance-none border border-[#b8b8b8] bg-white"><svg class="col-start-1 row-start-1 hidden peer-checked:block pointer-events-none" width="14" height="14"><path d="M3.500 6.500l2.500 4 4.500-8" fill="none" stroke="#000" stroke-width="2"/></svg></span>`;
document.querySelectorAll('[data-check]').forEach(e => e.innerHTML = cbox(+e.dataset.check));
document.querySelectorAll('[data-icon]').forEach(e => e.innerHTML = svg(e.dataset.icon, e.dataset.size));
document.querySelectorAll('[data-dock]').forEach(e => e.innerHTML =
  '<button aria-label="Float"><svg class="block" width="12" height="12" fill="none" stroke="#777"><rect x=".5" y=".5" width="11" height="11" rx="2"/><path d="M2.500 5.500h4v4h-4zM4.500 5.500v-3h5v5h-3"/></svg></button>' +
  '<button aria-label="Close"><svg class="block" width="12" height="12" fill="none" stroke="#777"><rect x=".5" y=".5" width="11" height="11" rx="2"/><path d="M3 3l6 6M9 3L3 9" stroke="#555" stroke-width="2"/></svg></button>');
document.querySelectorAll('[data-spin]').forEach(e => e.innerHTML =
  `<span class="h-[22px] flex rounded-xs border border-[#a8a8a8] bg-white"><input aria-label="${e.dataset.label}" value="${e.dataset.spin}" class="flex-1 min-w-0 pl-[3px] outline-none"><span class="w-3.5 border-l border-[#b8b8b8] bg-[#f4f4f4] flex flex-col items-center justify-center gap-1"><svg width="7" height="4"><path d="M0 4h7L3.500 0z" fill="#555"/></svg><svg width="7" height="4"><path d="M0 0h7L3.500 4z" fill="#555"/></svg></span></span>`);

const tri = '<svg width="4" height="8"><path d="M0 0v8L4 4z" fill="#555"/></svg>';
put('browserTree', [['fav', 'Favorites', 0], ['bm', 'Spatial Bookmarks', 1], ['home', 'Home', 1], ['gpkgS', 'GeoPackage', 1]]
  .map(([n, t, e]) => `<li class="h-[18px] flex items-center pl-2"><span class="w-4">${e ? tri : ''}</span><span class="w-[21px]">${n === 'gpkgS' ? `<svg class="block" width="16" height="16" viewBox="0 0 24 24">${box}</svg>` : svg(n, 16)}</span><span class="pt-px">${t}</span></li>`).join(''));

/* layer rows: [kind, name, checked, symbol, expander, indicator] */
const L = [
  ['i', 'Clipped', 0, '#b2e6b2', 0, 'mem'], ['t', 'builtup_spaces_gridded'], ['i', 'schools_cleaned', 0, 'dot#e8203c'],
  ['i', 'pofw', 0, 'dot#4a0ca0'], ['i', 'waterways', 0, 'line#e8b850'], ['i', 'green_spaces_gridded', 0, '#f4a4b2'],
  ['t', 'green_spaces_gridded'], ['i', 'builtup_spaces_gridded', 0, '#d4b43c'], ['i', 'Intersection', 0, 'poly', 1, 'mem'],
  ['i', 'landuse', 0, 'poly', 1, 'filt'], ['b', 'roads', 1, 'line#eeeeee'], ['s', 'Line length', 1, 'polyB', 1, 'mem'],
  ['c', '0 - 14669', 1, '#ffbfbf'], ['c', '14669 - 72303', 1, '#ff8080'], ['c', '72303 - 353215', 1, '#ff4040'], ['c', '353215 - 1312431', 1, '#ff0000'],
  ['i', 'Grid', 0, '#beb297', 0, 'mem'], ['b', 'lagos_admin_boundary', 1, '#ffffff'], ['i', 'buildings_Cleaned', 0, '#e8718d', 0, 'mem']
];
const swatch = (s) => s[0] === '#' ? `<svg class="block" width="16" height="16"><rect x=".5" y=".5" width="15" height="15" fill="${s}" stroke="#555"/></svg>`
  : s.startsWith('dot') ? `<svg class="block" width="16" height="16"><circle cx="8" cy="7.500" r="3.200" fill="${s.slice(3)}" stroke="#333" stroke-width=".6"/></svg>`
  : s.startsWith('line') ? `<svg class="block" width="16" height="16"><path d="M0 8.500h16" stroke="${s.slice(4)}"/></svg>` : svg(s, 16);
const tail = (ind) => `<span class="ml-auto flex h-full items-center">${ind ? `<button aria-label="Indicator" class="w-4 h-4 bg-[#f8f8f8] border border-[#e0e0e0] grid place-items-center">${svg(ind, 13)}</button>` : ''}<span class="w-[3px] h-4 ml-px mr-px bg-[#e4e4e4]"></span></span>`;
put('layers', L.map(([k, n, c, s, e, ind]) => {
  if (k === 't') return `<li class="h-[18px] flex items-center pl-6"><span class="w-[21px]">${svg('tbl', 16)}</span><span class="font-bold pt-px">${n}</span>${tail()}</li>`;
  if (k === 'c') return `<li class="h-[18px] flex items-center pl-[43px]">${cbox(c, n)}<svg class="ml-1.5 mr-1.5" width="18" height="18"><rect x=".5" y="0" width="17" height="17.500" fill="${s}" stroke="#444" stroke-opacity=".7"/></svg><span>${n}</span></li>`;
  const body = `${cbox(c, n)}<span class="ml-1.5 w-[22px]">${swatch(s)}</span>`;
  if (k === 's') return `<li class="h-[18px] flex items-center pl-[7px] bg-[#0f7fdc] text-white"><span class="w-4"><svg width="8" height="4"><path d="M0 0h8L4 4z" fill="#1c3450"/></svg></span>${body}<span class="font-bold underline pt-px">${n}</span>${tail(ind)}</li>`;
  const row = `<span class="w-4 pl-px">${e ? tri : ''}</span>${body}`;
  return k === 'i'
    ? `<li class="h-[18px] flex items-center pl-[7px]">${row}<span class="text-xs font-semibold italic text-[#808080]">${n}</span>${tail(ind)}</li>`
    : `<li class="h-[18px] flex items-center pl-[7px]">${row}<span class="font-bold pt-px">${n}</span>${tail(ind)}</li>`;
}).join(''));

put('classes', [['#ffbfbf', '0.00 - 14668.61', '0 - 14669'], ['#ff8080', '14668.61 - 72303.02', '14669 - 72303'], ['#ff4040', '72303.02 - 353215.02', '72303 - 353215'], ['#ff0000', '353215.02 - 1312431.07', '353215 - 1312431']]
  .map(([c, v, l]) => `<tr class="h-[18px]"><td class="p-0 pl-[3px]"><span class="flex items-center gap-1.5 pt-0.5">${cbox(1, l)}${swatch(c)}</span></td><td class="p-0 pl-[3px] whitespace-nowrap">${v}</td><td class="p-0 pl-[3px] whitespace-nowrap">${l}</td></tr>`).join(''));

/* ---- map: 19 x 4 grid, column-major numbering, road density on top ---- */
const rows = ['0000013333221120000', '0000033323201220000', '1123233333322220000', '2121001111000001110'];
const cols = ['#ffbfbf', '#ff8080', '#ff4040', '#ff0000'];
let cells = '', roads = '', text = '';
rows.forEach((r, y) => [...r].forEach((c, x) => {
  cells += `<rect x="${x * 28 + .5}" y="${y * 28 + .5}" width="28" height="28" fill="${cols[c]}" stroke="#333" stroke-width="1"/>`;
  text += `<text x="${x * 28 + 14}" y="${y * 28 + 18}">${x * 4 + y + 1}</text>`;
}));
let seed = 7;
const rnd = () => (seed = (seed * 16807) % 2147483647) / 2147483647;
/* x0, y0, x1, y1, number of strokes */
[[168, 6, 196, 28, 200], [176, 1, 190, 8, 40], [168, 28, 196, 56, 240], [159, 32, 168, 54, 90], [196, 28, 218, 68, 240], [200, 12, 222, 27, 130], [168, 56, 194, 84, 260],
 [140, 60, 168, 80, 260], [196, 72, 226, 84, 180], [112, 62, 140, 74, 120], [85, 60, 110, 74, 150], [56, 74, 84, 87, 110], [70, 58, 84, 76, 45], [84, 76, 168, 86, 100],
 [224, 72, 252, 83, 180], [252, 72, 284, 83, 160], [262, 58, 282, 74, 140], [228, 3, 252, 27, 200], [243, 28, 252, 51, 110], [252, 1, 274, 27, 300], [252, 28, 276, 50, 180],
 [281, 4, 304, 28, 150], [281, 28, 299, 42, 100], [288, 68, 310, 81, 150], [309, 62, 340, 76, 70], [340, 60, 362, 80, 45], [392, 22, 405, 37, 70], [400, 8, 416, 26, 22],
 [308, 4, 336, 24, 24], [218, 24, 240, 30, 45], [60, 85, 220, 89, 90], [340, 66, 420, 84, 30]
].forEach(([a, b, c, d, n]) => {
  for (let i = 0; i < n; i++) {
    const x = a + rnd() * (c - a), y = b + rnd() * (d - b);
    roads += `M${x.toFixed(1)} ${y.toFixed(1)}l${(rnd() * 4 - 2).toFixed(1)} ${(rnd() * 4 - 2).toFixed(1)}`;
  }
});
const dense = 'M171 8l5-7 7 4 11 3 3 9 0 9-3 2 0 11 4-6 12-5 9 3-3 6 2 12-2 6 2 8-3 6-6 2 1 8-6 3-2-4-8 0-3 3-3 3-13 2-4-2-2-14-2-6 3-6-4-3-6-3-3-8 4-7 6-3 5-7zM203 16l7-4 6 4 6 6-4 5-8 3-7-2zM200 74l8 0 8 3 10-2 1 6-14 4-12-3zM144 62l10-2 8 5 4 6-6 7-9-2-8-6zM92 62l8-1 6 5 3 4-8 3-8-2zM228 73l12 2 10-1 14 0 6 3-8 5-18-1-14 1zM232 5l12 1 6 6 1 12-6 2-4-9-7-4zM256 3l7 2 10 6-4 8 1 7-9-3-7 4zM246 30l5 0 0 19-5-6zM254 30l9 1 6 6-3 8-7 2-4-8zM263 62l8-3 8 4-2 7-9 1zM284 10l10 2 6 7-6 3-8-3zM290 70l8 2 10-1-3 7-9 1zM118 64l14 2 5 4-12 3z';
put('map', cells + `<path d="${dense}" fill="#7c6068" fill-opacity=".85"/><path d="${roads}" stroke="#7c646c" stroke-width="1.500" stroke-opacity=".75" fill="none"/>` +
  '<path d="M0 78l8 6 20 5 22-3 6-10M0 98l30-6 20-4M56 84h110M196 86l60 2M308 10l30 14 20-12 24 16 20-14M340 70l40 8 40 2M420 86l30 6 60 2 16 2M446 66l34 10M330 30l20 22" fill="none" stroke="#806870" stroke-opacity=".3"/>' +
  `<g text-anchor="middle" fill="#111" stroke="#fff" stroke-width="3.500" stroke-linejoin="round" paint-order="stroke">${text}</g>` +
  '<path d="M0 .5h533M0 112.500h533" stroke="#666" stroke-width="1"/>');
</script>
</body>
</html>
